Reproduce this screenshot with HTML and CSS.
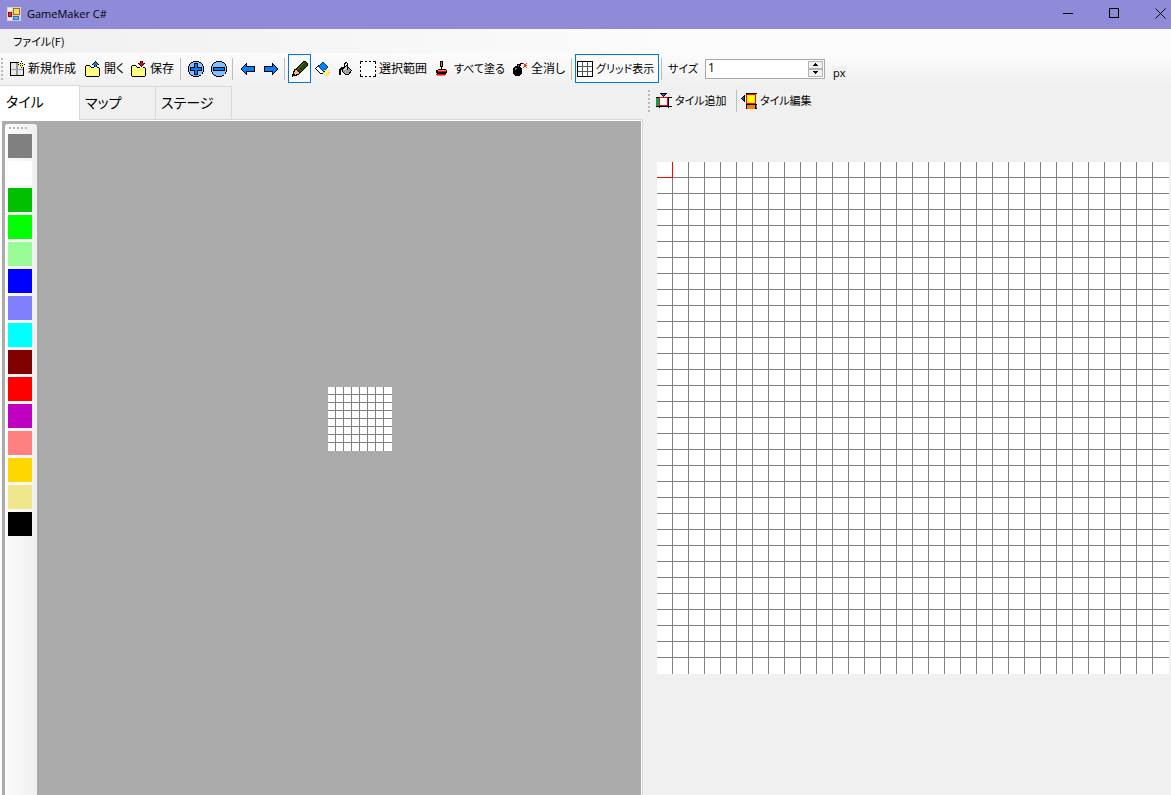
FILE: index.html
```
<!DOCTYPE html>
<html lang="ja">
<head>
    <meta charset="UTF-8">
    <meta name="viewport" content="width=device-width, initial-scale=1.0">
    <title>GameMaker C#</title>
    <link rel="stylesheet" href="styles.css">
</head>
<body>
    <header class="titlebar">
        <svg class="app-icon" viewBox="0 0 14 14" shape-rendering="crispEdges">
            <path fill="#d8d4c8" d="M0 0h14v14H0z"/>
            <path fill="#f3eee0" d="M1 1h4v3H1zM1 11h4v2H1z"/>
            <path fill="#a07010" d="M6 1h7v7H6z"/>
            <path fill="#ffd75a" d="M7 2h5v5H7z"/>
            <path fill="#8c1010" d="M1 5h4v5H1z"/>
            <path fill="#e03020" d="M2 6h2v3H2z"/>
            <path fill="#2b6ad0" d="M6 9h6v4H6z"/>
            <path fill="#6fb0f8" d="M7 10h4v2H7z"/>
        </svg>
        <h1 class="title">GameMaker C#</h1>
        <div class="window-buttons">
            <button type="button" aria-label="最小化"><svg viewBox="0 0 11 11" shape-rendering="crispEdges"><path fill="#000" d="M0 5h10v1H0z"/></svg></button>
            <button type="button" aria-label="最大化"><svg viewBox="0 0 11 11" shape-rendering="crispEdges"><path fill="none" stroke="#000" d="M.5 .5h9v9h-9z"/></svg></button>
            <button type="button" aria-label="閉じる"><svg viewBox="0 0 11 11"><path fill="none" stroke="#000" d="M.5 .5l10 10M10.5 .5l-10 10"/></svg></button>
        </div>
    </header>

    <nav class="menubar">
        <button type="button">ファイル(F)</button>
    </nav>

    <div class="toolbar">
        <span class="grip"></span>
        <button type="button" class="tool tool-new">
            <svg viewBox="0 0 16 16" shape-rendering="crispEdges">
                <path fill="#e8e8e8" d="M2 2h12v12H2z"/>
                <path fill="#999" d="M7 2h2v12H7zM2 8h12v1H2z"/>
                <path fill="#000" d="M1 1h9v1H1zM1 1h1v14H1zM1 14h14v1H1zM14 6h1v9h-1zM12 0h1v2h-1zM9 3h2v1H9zM14 3h2v1h-2zM12 5h1v2h-1zM11 2h3v3h-3z"/>
                <path fill="#ff0" d="M12 1h1v5h-1zM10 3h5v1h-5z"/>
            </svg>
            <span>新規作成</span>
        </button>
        <button type="button" class="tool tool-open">
            <svg viewBox="0 0 16 16" shape-rendering="crispEdges">
                <path fill="#ffff80" d="M1 5h5v2h8v8H1z"/>
                <path fill="#000" d="M1 4h4v1H1zM0 5h1v10H0zM5 5h1v1H5zM6 6h3v1H6zM12 6h2v1h-2zM14 7h1v8h-1zM1 15h13v1H1zM10 0h1v1h-1zM9 1h3v1H9zM8 2h5v1H8zM7 3h7v1H7zM9 4h3v2H9z"/>
                <path fill="#0080ff" d="M10 1h1v5h-1zM9 2h3v1H9zM8 3h5v1H8z"/>
            </svg>
            <span>開く</span>
        </button>
        <button type="button" class="tool tool-save">
            <svg viewBox="0 0 16 16" shape-rendering="crispEdges">
                <path fill="#ffff80" d="M1 5h5v2h8v8H1z"/>
                <path fill="#000" d="M1 4h4v1H1zM0 5h1v10H0zM5 5h1v1H5zM6 6h3v1H6zM12 6h2v1h-2zM14 7h1v8h-1zM1 15h13v1H1zM9 0h3v2H9zM7 2h7v1H7zM8 3h5v1H8zM9 4h3v1H9zM10 5h1v1h-1z"/>
                <path fill="#f00" d="M10 0h1v5h-1zM8 2h5v1H8zM9 3h3v1H9z"/>
            </svg>
            <span>保存</span>
        </button>
        <span class="sep"></span>
        <button type="button" class="tool icon-tool" aria-label="拡大">
            <svg viewBox="0 0 16 16" shape-rendering="crispEdges">
                <path fill="#80c0ff" stroke="#000" d="M5.500 .5h5l3 2l2 3v5l-2 3l-3 2h-5l-3-2l-2-3v-5l2-3z"/>
                <path fill="#0080ff" stroke="#000" d="M6.500 2.500h3v4h4v3h-4v4h-3v-4h-4v-3h4z"/>
            </svg>
        </button>
        <button type="button" class="tool icon-tool" aria-label="縮小">
            <svg viewBox="0 0 16 16" shape-rendering="crispEdges">
                <path fill="#80c0ff" stroke="#000" d="M5.500 .5h5l3 2l2 3v5l-2 3l-3 2h-5l-3-2l-2-3v-5l2-3z"/>
                <path fill="#0080ff" stroke="#000" d="M2.500 6.500h11v3h-11z"/>
            </svg>
        </button>
        <span class="sep"></span>
        <button type="button" class="tool icon-tool" aria-label="元に戻す">
            <svg viewBox="0 0 16 16" shape-rendering="crispEdges"><path fill="#0080ff" stroke="#000" d="M1.500 7.500l5-5v3h8v5h-8v3l-5-5z"/></svg>
        </button>
        <button type="button" class="tool icon-tool" aria-label="やり直し">
            <svg viewBox="0 0 16 16" shape-rendering="crispEdges"><path fill="#0080ff" stroke="#000" d="M14.500 7.500l-5-5v3h-8v5h8v3l5-5z"/></svg>
        </button>
        <span class="sep"></span>
        <button type="button" class="tool icon-tool checked" aria-label="ペン">
            <svg viewBox="0 0 16 16" shape-rendering="crispEdges">
                <path fill="#284808" stroke="#000" d="M3.500 8.500l8-8h2l2 2v2l-8 8z"/>
                <path fill="none" stroke="#507020" d="M5 9l7-7"/>
                <path fill="#ffb070" stroke="#000" d="M1.500 12.500l1-4h2l3 3v1l-4 2z"/>
                <path fill="#ffb070" d="M3 9h2v2h2v2H3z"/>
                <path fill="#000" d="M0 13h2v1h1v1H1v1H0z"/>
            </svg>
        </button>
        <button type="button" class="tool icon-tool" aria-label="消しゴム">
            <svg viewBox="0 0 16 16" shape-rendering="crispEdges">
                <path fill="#fff" stroke="#000" d="M.5 7.500l3-3l6 6l-2 2h-2z"/>
                <path fill="#0080ff" stroke="#004080" d="M3.500 5.500l4-4h1l4 4v1l-4 4z"/>
                <path fill="#ffd000" d="M11 8h1v7h-1zM8 11h7v1H8zM9 9h1v1H9zM13 9h1v1h-1zM9 13h1v1H9zM13 13h1v1h-1z"/>
                <path fill="#ffff80" d="M10 10h3v3h-3z"/>
            </svg>
        </button>
        <button type="button" class="tool icon-tool" aria-label="塗りつぶし">
            <svg viewBox="0 0 16 16" shape-rendering="crispEdges">
                <path fill="#a0a0a0" stroke="#000" d="M4.500 8.500l4-4l5 5l-3 4h-3l-3-3z"/>
                <path fill="#e0e0e0" d="M6 8l3-3l1 1l-3 4z"/>
                <path fill="none" stroke="#000" d="M6.500 6.500v-4l2-1l1 1v6"/>
                <path fill="#000" d="M3 6h3v2H4v1H3v5H1V8h1V7h1z"/>
            </svg>
        </button>
        <button type="button" class="tool tool-select">
            <svg viewBox="0 0 16 16" shape-rendering="crispEdges">
                <path fill="#fff" d="M0 0h16v16H0z"/>
                <path fill="#000" d="M0 0h3v1H0zM5 0h2v1H5zM9 0h2v1H9zM13 0h3v1h-3zM0 15h3v1H0zM5 15h2v1H5zM9 15h2v1H9zM13 15h3v1h-3zM0 0h1v3H0zM0 5h1v2H0zM0 9h1v2H0zM0 13h1v3H0zM15 0h1v3h-1zM15 5h1v2h-1zM15 9h1v2h-1zM15 13h1v3h-1z"/>
            </svg>
            <span>選択範囲</span>
        </button>
        <button type="button" class="tool tool-fill">
            <svg viewBox="0 0 16 16" shape-rendering="crispEdges">
                <path fill="#000" d="M5 0h3v6H5zM6 6h1v3H6zM3 8h8v1H3zM1 9h2v2H1zM11 9h1v2h-1zM1 11h11v1H1zM2 12h9v1H2z"/>
                <path fill="#f07020" d="M6 1h1v4H6z"/>
                <path fill="#ff8080" d="M3 9h8v1H3z"/>
                <path fill="#f00" d="M3 10h8v1H3zM1 13h10v1H1z"/>
                <path fill="#ff8080" d="M2 14h8v1H2z"/>
            </svg>
            <span class="kana">すべて塗る</span>
        </button>
        <button type="button" class="tool tool-clear">
            <svg viewBox="0 0 16 16" shape-rendering="crispEdges">
                <path fill="#000" d="M3 5h5v1h1v1h1v6H9v1H8v1H3v-1H2v-1H1V7h1V6h1zM5 3h4v2H5zM8 2h3v1H8z"/>
                <path fill="#888" d="M3 7h2v1H3zM3 8h1v1H3zM6 4h1v1H6z"/>
                <path fill="#f03000" d="M11 2h1v1h-1zM12 3h2v3h-2zM14 2h1v1h-1zM11 6h1v1h-1zM14 6h1v1h-1zM14 4h1v1h-1z"/>
            </svg>
            <span>全消し</span>
        </button>
        <span class="sep"></span>
        <button type="button" class="tool tool-grid checked" aria-pressed="true">
            <svg viewBox="0 0 16 16" shape-rendering="crispEdges">
                <path fill="#fff" stroke="#000" d="M.5 .5h15v15H.5z"/>
                <path fill="none" stroke="#506050" d="M5.500 1v14M10.500 1v14M1 5.500h14M1 10.500h14"/>
            </svg>
            <span class="kana">グリッド表示</span>
        </button>
        <span class="sep"></span>
        <label class="size-label kana" for="size">サイズ</label>
        <div class="spinbox">
            <input type="number" id="size" min="1" value="1">
            <div class="spin-buttons">
                <button type="button" id="sizeUp" aria-label="増やす"><svg viewBox="0 0 5 3" shape-rendering="crispEdges"><path d="M2 0h1v1h1v1h1v1H0V2h1V1h1z"/></svg></button>
                <button type="button" id="sizeDown" aria-label="減らす"><svg viewBox="0 0 5 3" shape-rendering="crispEdges"><path d="M0 0h5v1H4v1H3v1H2V2H1V1H0z"/></svg></button>
            </div>
        </div>
        <span class="unit">px</span>
    </div>

    <main class="workspace">
        <section class="editor">
            <div class="tabs" role="tablist">
                <button type="button" class="tab active" role="tab" aria-selected="true">タイル</button>
                <button type="button" class="tab" role="tab">マップ</button>
                <button type="button" class="tab" role="tab">ステージ</button>
            </div>
            <div class="stage">
                <div class="palette">
                    <span class="palette-grip"></span>
                    <button type="button" class="swatch gray" aria-label="灰"></button>
                    <button type="button" class="swatch white" aria-label="白"></button>
                    <button type="button" class="swatch green" aria-label="緑"></button>
                    <button type="button" class="swatch lime" aria-label="黄緑"></button>
                    <button type="button" class="swatch palegreen" aria-label="薄緑"></button>
                    <button type="button" class="swatch blue" aria-label="青"></button>
                    <button type="button" class="swatch paleblue" aria-label="薄青"></button>
                    <button type="button" class="swatch cyan" aria-label="水色"></button>
                    <button type="button" class="swatch maroon" aria-label="茶"></button>
                    <button type="button" class="swatch red" aria-label="赤"></button>
                    <button type="button" class="swatch purple" aria-label="紫"></button>
                    <button type="button" class="swatch pink" aria-label="桃"></button>
                    <button type="button" class="swatch gold" aria-label="金"></button>
                    <button type="button" class="swatch khaki" aria-label="黄土"></button>
                    <button type="button" class="swatch black" aria-label="黒"></button>
                </div>
                <div class="canvas">
                    <div class="grid tile-grid"></div>
                </div>
            </div>
        </section>

        <aside class="tiles">
            <div class="tiles-toolbar">
                <span class="grip"></span>
                <button type="button" class="tool tool-add">
                    <svg viewBox="0 0 16 16" shape-rendering="crispEdges">
                        <path fill="#00a850" d="M0 4h4v9H0z"/>
                        <path fill="#fff" d="M4 5h8v8H4z"/>
                        <path fill="#000" d="M0 4h16v1H0zM0 13h16v1H0zM3 4h1v11H3zM12 4h1v11h-1zM4 0h7v1H4zM5 1h5v1H5zM6 2h3v1H6zM7 3h1v1H7z"/>
                        <path fill="#0060c0" d="M6 1h3v1H6zM7 2h1v1H7z"/>
                        <path fill="none" stroke="#f00" d="M3.500 4.500h8v8h-8z"/>
                    </svg>
                    <span class="kana">タイル追加</span>
                </button>
                <span class="sep"></span>
                <button type="button" class="tool tool-edit">
                    <svg viewBox="0 0 16 16" shape-rendering="crispEdges">
                        <path fill="#000" d="M5 0h11v1H5zM5 11h11v5H5zM0 5h1v1H0zM1 4h1v3H1zM2 3h1v5H2zM3 2h1v7H3z"/>
                        <path fill="#0060c0" d="M1 5h2v1H1zM2 4h1v3H2z"/>
                        <path fill="#ff8000" d="M6 12h8v4H6z"/>
                        <path fill="#00a0a0" d="M15 12h1v3h-1z"/>
                        <path fill="#ff0" stroke="#f00" d="M5.500 1.500h9v9h-9z"/>
                    </svg>
                    <span class="kana">タイル編集</span>
                </button>
            </div>
            <div class="grid tile-set"><div class="cursor"></div></div>
        </aside>
    </main>

    <script>
        const size = document.getElementById('size');
        document.getElementById('sizeUp').addEventListener('click', () => size.stepUp());
        document.getElementById('sizeDown').addEventListener('click', () => size.stepDown());
    </script>
</body>
</html>
```
FILE: styles.css
```
* {
    margin: 0;
    padding: 0;
    box-sizing: border-box;
}

body {
    display: flex;
    flex-direction: column;
    height: 100vh;
    overflow: hidden;
    background: #f0f0f0;
    color: #000;
    font-family: 'Noto Sans CJK JP', sans-serif;
    font-size: 12px;
    line-height: 16px;
    font-feature-settings: "palt";
}

button {
    border: none;
    background: none;
    font: inherit;
    color: inherit;
    font-feature-settings: inherit;
}

svg {
    display: block;
    flex: none;
}

.kana {
    font-size: 11px;
}

/* Title bar */
.titlebar {
    display: flex;
    align-items: center;
    flex: none;
    height: 29px;
    padding-left: 7px;
    padding-bottom: 2px;
    background: #8f8bd9;
}

.app-icon {
    width: 14px;
    height: 14px;
}

.title {
    margin-left: 6px;
    font-family: 'Open Sans', sans-serif;
    font-size: 11px;
    font-weight: 400;
}

.window-buttons {
    display: flex;
    margin-left: auto;
}

.window-buttons button {
    width: 46px;
    height: 27px;
    padding-left: 18px;
}

.window-buttons button:last-child {
    width: 34px;
}

.window-buttons svg {
    width: 11px;
    height: 11px;
}

/* Menu */
.menubar {
    flex: none;
    height: 24px;
    padding-left: 13px;
    background: linear-gradient(90deg, #f0f0f0, #fcfcfc 60%);
}

.menubar button {
    height: 24px;
    font-size: 11px;
}

/* Toolbars */
.toolbar {
    display: flex;
    align-items: center;
    flex: none;
    height: 32px;
    padding-left: 1px;
    padding-bottom: 1px;
    background: linear-gradient(#fcfcfc, #f0f0f0);
    white-space: nowrap;
}

.grip {
    flex: none;
    width: 2px;
    height: 22px;
    background: repeating-linear-gradient(#b8b8b8 0 2px, transparent 2px 4px);
}

.sep {
    flex: none;
    width: 1px;
    height: 22px;
    margin: 0 3px 0 2px;
    background: #bdbdbd;
}

.tool {
    display: flex;
    align-items: center;
    flex: none;
    gap: 3px;
    height: 29px;
    padding: 0 3px;
}

.tool svg {
    width: 16px;
    height: 16px;
}

.tool span {
    padding-bottom: 2px;
}

.icon-tool {
    justify-content: center;
    width: 23px;
}

.checked {
    border: 1px solid #0078d7;
    background: #fafafa;
}

.tool-new {
    width: 76px;
    padding-left: 6px;
}

.tool-open {
    width: 49px;
    padding-left: 6px;
}

.tool-save {
    width: 50px;
}

.tool-select {
    width: 75px;
}

.tool-fill {
    width: 77px;
}

.tool-clear {
    width: 60px;
}

.tool-grid {
    width: 84px;
    padding: 0 1px;
}

.size-label {
    width: 40px;
    padding: 0 0 2px 3px;
}

.spinbox {
    display: flex;
    width: 120px;
    height: 20px;
    padding: 1px;
    border: 1px solid #a8a8a8;
    background: #fff;
}

.spinbox input {
    flex: 1;
    min-width: 0;
    border: none;
    outline: none;
    padding: 0 0 2px 1px;
    font-family: 'Open Sans', sans-serif;
    font-size: 12px;
    appearance: textfield;
    -moz-appearance: textfield;
}

.spinbox input::-webkit-inner-spin-button {
    appearance: none;
    display: none;
}

.spin-buttons {
    display: flex;
    flex-direction: column;
    width: 15px;
}

.spin-buttons button {
    display: flex;
    align-items: center;
    justify-content: center;
    flex: 1;
    border: 1px solid #b4b4b4;
    background: #f0f0f0;
}

.spin-buttons svg {
    width: 5px;
    height: 3px;
}

.unit {
    align-self: flex-end;
    margin: 0 0 4px 7px;
    padding: 0 1px;
    background: #f0f0f0;
    font-family: 'Open Sans', sans-serif;
    font-size: 11px;
    line-height: 14px;
}

/* Workspace */
.workspace {
    display: flex;
    flex: 1;
    min-height: 0;
}

.editor {
    display: flex;
    flex-direction: column;
    flex: 1;
    min-width: 0;
}

.tabs {
    display: flex;
    align-items: flex-end;
    height: 35px;
    border-bottom: 1px solid #d9d9d9;
}

.tab {
    width: 76px;
    height: 33px;
    padding: 0 0 2px 5px;
    border: 1px solid #d9d9d9;
    border-width: 1px 1px 0 0;
    font-size: 14px;
    text-align: left;
}

.tab.active {
    width: 80px;
    height: 35px;
    margin-bottom: -1px;
    padding: 0 0 5px 6px;
    background: #fff;
}

.stage {
    display: flex;
    flex: 1;
    margin-right: 1px;
    border: solid #fff;
    border-width: 1px 1px 0 2px;
    background: #ababab;
    box-shadow: 1px 0 #d9d9d9;
}

.palette {
    display: flex;
    flex-direction: column;
    gap: 3px;
    width: 32px;
    margin: 3px 0 0 3px;
    padding: 3px;
    border-radius: 3px 3px 0 0;
    background: linear-gradient(90deg, #fcfcfc, #f0f0f0);
}

.palette-grip {
    width: 18px;
    height: 2px;
    margin: 0 0 2px 1px;
    background: repeating-linear-gradient(90deg, #b8b8b8 0 2px, transparent 2px 4px);
}

.swatch {
    width: 24px;
    height: 24px;
}

.gray { background: #808080; }
.white { background: #fff; }
.green { background: #00c000; }
.lime { background: #0f0; }
.palegreen { background: #98fb98; }
.blue { background: #00f; }
.paleblue { background: #8080ff; }
.cyan { background: #0ff; }
.maroon { background: #800000; }
.red { background: #f00; }
.purple { background: #c000c0; }
.pink { background: #ff8080; }
.gold { background: #ffd700; }
.khaki { background: #f0e68c; }
.black { background: #000; }

.canvas {
    position: relative;
    flex: 1;
}

/* Lines sit on the last pixel of each cell, except on the outer edge */
.grid {
    background:
        repeating-linear-gradient(90deg, transparent 0 calc(var(--cell) - 1px), #808080 calc(var(--cell) - 1px) var(--cell)) no-repeat,
        repeating-linear-gradient(transparent 0 calc(var(--cell) - 1px), #808080 calc(var(--cell) - 1px) var(--cell)) no-repeat,
        #fff;
    background-size: calc(100% - 1px) 100%, 100% calc(100% - 1px);
}

.tile-grid {
    --cell: 8px;
    position: absolute;
    left: 291px;
    top: 266px;
    width: 64px;
    height: 64px;
}

/* Tile list */
.tiles {
    flex: none;
    width: 528px;
    padding-left: 5px;
}

.tiles-toolbar {
    display: flex;
    align-items: center;
    height: 31px;
    white-space: nowrap;
}

.tool-add {
    width: 84px;
    padding-left: 6px;
}

.tool-edit {
    width: 80px;
    padding-left: 1px;
}

.tile-set {
    --cell: 16px;
    width: 512px;
    height: 512px;
    margin: 46px 0 0 9px;
}

.cursor {
    width: 16px;
    height: 16px;
    border: solid #f00;
    border-width: 0 1px 1px 0;
}
```
